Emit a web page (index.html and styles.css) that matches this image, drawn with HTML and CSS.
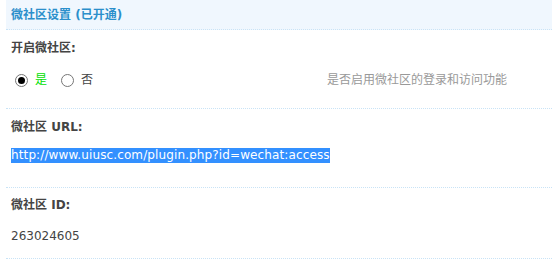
FILE: index.html
```html
<!DOCTYPE html>
<html>
<head>
<meta charset="utf-8">
<link rel="stylesheet" href="styles.css">
</head>
<body>
<div class="panel">
  <div class="header"><span class="title">微社区设置 (已开通)</span></div>
  <div class="section s1">
    <div class="label">开启微社区:</div>
    <div class="value row">
      <div class="radios">
        <span class="radio checked"></span><span class="opt yes">是</span>
        <span class="radio"></span><span class="opt">否</span>
      </div>
      <div class="desc">是否启用微社区的登录和访问功能</div>
    </div>
  </div>
  <div class="section s2">
    <div class="label">微社区 URL:</div>
    <div class="value"><span class="sel">http://www.uiusc.com/plugin.php?id=wechat:access</span></div>
  </div>
  <div class="section s3">
    <div class="label">微社区 ID:</div>
    <div class="value">263024605</div>
  </div>
</div>
</body>
</html>
```
FILE: styles.css
```css
html, body {
  margin: 0;
  padding: 0;
  background: #fff;
}
body {
  font-family: "DejaVu Sans", "Noto Sans CJK SC", sans-serif;
  font-size: 12px;
  color: #444;
}
.panel {
  padding-left: 6px;
}
.header {
  height: 30px;
  background: #f0f7fe;
  border-bottom: 1px dotted #c9e3f6;
  padding-left: 5px;
  padding-bottom: 2px;
  box-sizing: border-box;
  display: flex;
  align-items: center;
}
.title {
  font-weight: bold;
  color: #2b8fcb;
}
.section {
  border-bottom: 1px dotted #c9e3f6;
  padding-left: 5px;
}
.label, .value {
  height: 18px;
  line-height: 18px;
}
.label {
  font-weight: bold;
  color: #444;
}
.s1 { padding-top: 9px; padding-bottom: 19px; }
.s1 .value { margin-top: 14px; }
.s2 { padding-top: 9px; padding-bottom: 23px; }
.s2 .value { margin-top: 10px; }
.s3 { padding-top: 8px; padding-bottom: 13px; }
.s3 .value { margin-top: 13px; }
.row {
  display: grid;
  grid-template-columns: 316px auto;
  align-items: center;
}
.radios {
  display: flex;
  align-items: center;
  padding-left: 4px;
}
.radio {
  width: 13px;
  height: 13px;
  box-sizing: border-box;
  border: 1px solid #767676;
  border-radius: 50%;
  display: flex;
  align-items: center;
  justify-content: center;
  background: #fff;
}
.radio.checked::after {
  content: "";
  width: 7px;
  height: 7px;
  border-radius: 50%;
  background: #000;
}
.opt {
  margin-left: 7px;
  margin-right: 14px;
  color: #444;
}
.yes {
  color: #00e000;
}
.desc {
  color: #999;
}
.sel {
  background: #3390ff;
  color: #fff;
  display: inline-block;
  vertical-align: top;
  margin-top: 2px;
  height: 15px;
  line-height: 15px;
  letter-spacing: 0.12px;
}
```
